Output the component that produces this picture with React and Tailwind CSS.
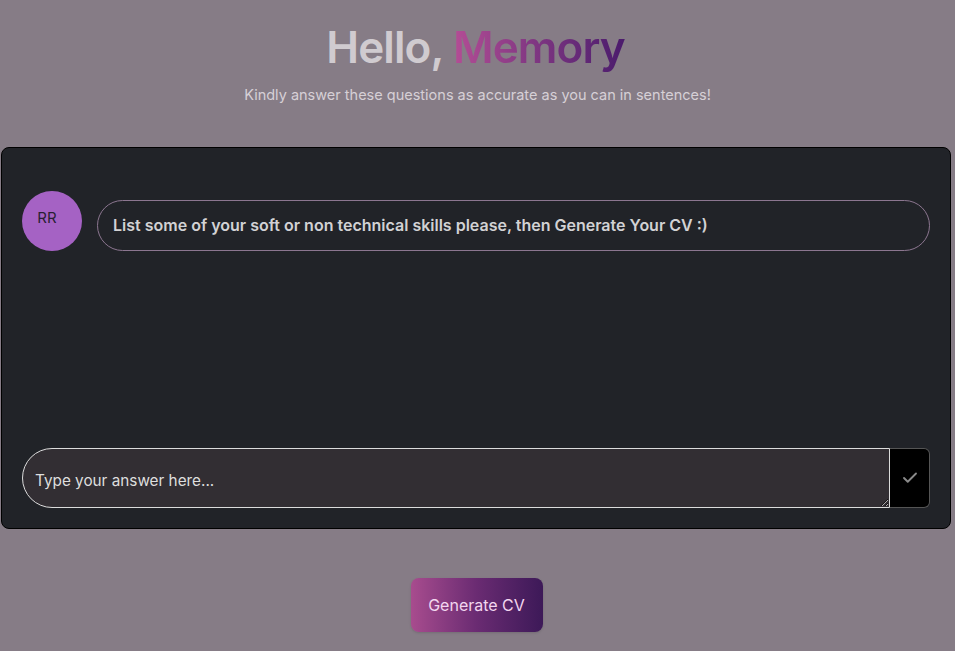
import React, { useState } from "react";
import { Check } from "lucide-react";

function App() {
  const [answer, setAnswer] = useState("");

  return (
    <div
      className="min-h-screen w-full bg-[#867c86] flex flex-col items-center"
      style={{ fontFamily: "Inter, 'Liberation Sans', sans-serif" }}
    >
      {/* Header */}
      <h1 className="mt-[19px] -ml-[4px] text-[44px] leading-[56px] font-semibold tracking-[-0.02em] text-[#d0cbd0]">
        Hello,{" "}
        <span className="bg-gradient-to-r from-[#b44d95] to-[#4b1b6c] bg-clip-text text-transparent">
          Memory
        </span>
      </h1>
      <p className="mt-[9px] text-[14.5px] text-[#d6d0d6]">
        Kindly answer these questions as accurate as you can in sentences!
      </p>

      {/* Chat card */}
      <div className="mt-[41px] w-[950px] h-[382px] ml-[1px] mr-auto bg-[#212328] border border-black rounded-lg flex flex-col px-[20px]">
        <div className="mt-[43px] flex items-start gap-[15px]">
          <div className="w-[60px] h-[60px] shrink-0 rounded-full bg-[#a562c4] flex items-center justify-center pb-[5px] pr-[10px]">
            <span className="text-[15px] text-[#2a2033]">RR</span>
          </div>
          <div className="mt-[9px] flex-1 h-[51px] rounded-[26px] border border-[#8c7690] flex items-center px-[15px]">
            <p className="text-[16px] font-semibold text-[#d2d2d4]">
              List some of your soft or non technical skills please, then Generate Your CV :)
            </p>
          </div>
        </div>

        <div className="mt-auto mb-[20px] flex h-[60px]">
          <textarea
            value={answer}
            onChange={(e) => setAnswer(e.target.value)}
            placeholder="Type your answer here..."
            className="flex-1 h-full bg-[#322e33] border border-[#dcdcdc] rounded-l-[30px] pl-[12px] pt-[21px] text-[15.3px] text-[#e0e0e0] placeholder-[#dedede] outline-none resize"
          />
          <button className="w-[40px] h-full bg-black border border-[#555] border-l-0 rounded-r-[6px] flex items-center justify-center text-[#8a8a8a]">
            <Check size={18} strokeWidth={2.5} />
          </button>
        </div>
      </div>

      {/* Generate */}
      <button className="mt-[49px] -ml-[2px] w-[132px] h-[54px] rounded-lg bg-gradient-to-r from-[#a84c8e] via-[#6a2b72] to-[#3d1958] text-[16px] text-[#f2d6ef] shadow-sm">
        Generate CV
      </button>
    </div>
  );
}

export default App;
